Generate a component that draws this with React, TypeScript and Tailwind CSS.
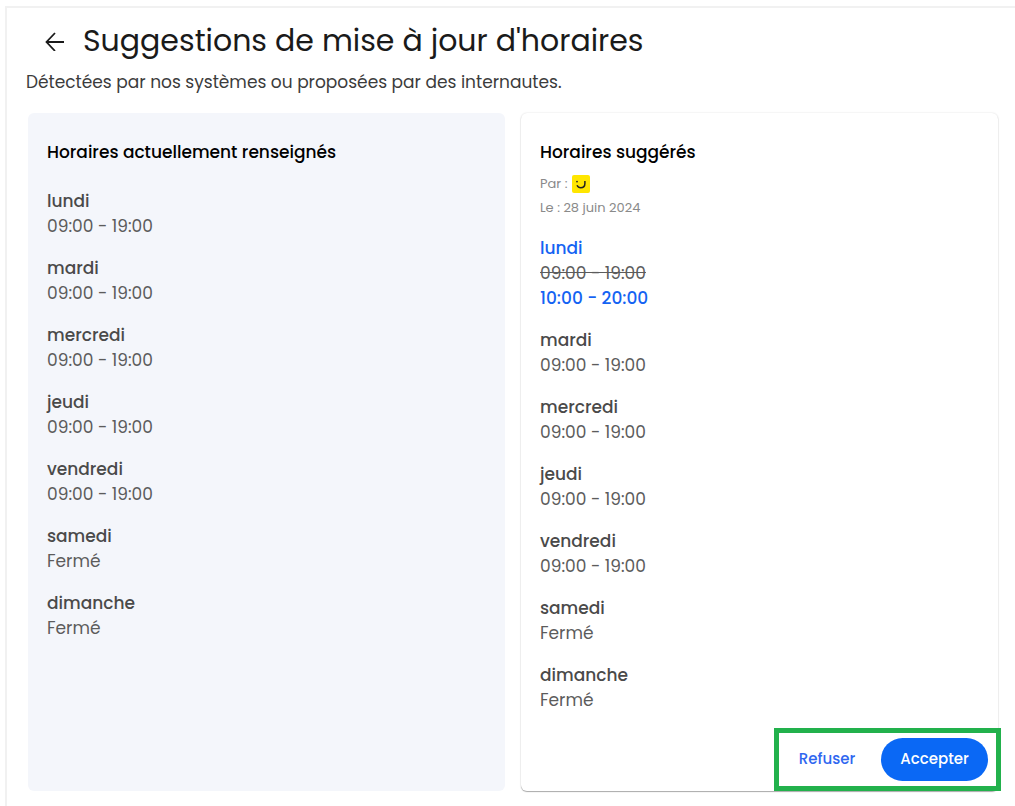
import { useState } from "react";

type Day = {
  name: string;
  hours: string;
  suggested?: string;
};

const currentHours: Day[] = [
  { name: "lundi", hours: "09:00 - 19:00" },
  { name: "mardi", hours: "09:00 - 19:00" },
  { name: "mercredi", hours: "09:00 - 19:00" },
  { name: "jeudi", hours: "09:00 - 19:00" },
  { name: "vendredi", hours: "09:00 - 19:00" },
  { name: "samedi", hours: "Fermé" },
  { name: "dimanche", hours: "Fermé" },
];

const suggestedHours: Day[] = currentHours.map(d =>
  d.name === "lundi" ? { ...d, suggested: "10:00 - 20:00" } : d
);

function DayList({ days }: { days: Day[] }) {
  return (
    <ul className="flex flex-col gap-[17px] text-[17px] leading-[25px] text-[#5c5c5c]">
      {days.map(d => (
        <li key={d.name}>
          <h3 className={d.suggested ? "font-medium text-[#1463f3]" : "font-medium text-[#4a4a4a]"}>{d.name}</h3>
          <p className={d.suggested ? "line-through" : ""}>{d.hours}</p>
          {d.suggested && <p className="font-medium text-[#1463f3]">{d.suggested}</p>}
        </li>
      ))}
    </ul>
  );
}

function Smiley() {
  return (
    <svg viewBox="0 0 18 18" className="size-[18px]" role="img" aria-label="PagesJaunes">
      <rect width="18" height="18" rx="2" fill="#ffe600" />
      <circle cx="5" cy="6.6" r="0.9" fill="#222" />
      <path d="M5 10.2c.8 1.8 2 2.6 3.7 2.6 2.7 0 4.2-1.6 4.2-4.2V6" fill="none" stroke="#222" strokeWidth="1.5" />
    </svg>
  );
}

export default function App() {
  const [, setAnswer] = useState<"accepted" | "refused" | null>(null);

  return (
    <main className="ml-[5px] mt-1.5 min-h-[calc(100vh-6px)] border-l-2 border-t-2 border-[#f1f1f1] bg-white pl-[21px] pr-[17px] font-['Poppins','Inter',sans-serif]">
      <header className="-ml-0.5 pt-[13px]">
        <div className="flex items-center gap-[18px] pl-[19px]">
          <button type="button" aria-label="Retour" className="shrink-0">
            <svg viewBox="0 0 20 20" className="size-5" fill="none" stroke="#1a1a1a" strokeWidth="1.8">
              <path d="M19 11H1.500M10 2 1.500 11l8.500 9" />
            </svg>
          </button>
          <h1 className="text-[30px] leading-10 text-[#1a1a1a]">Suggestions de mise à jour d'horaires</h1>
        </div>
        <p className="mt-[9px] text-[17px] leading-[25px] text-[#3c3c3c]">
          Détectées par nos systèmes ou proposées par des internautes.
        </p>
      </header>

      <div className="mt-[18px] grid grid-cols-2 gap-4">
        <section className="rounded-md bg-[#f4f6fb] px-[19px] pt-[27px]">
          <h2 className="mb-6 text-[17px] font-medium leading-[25px] text-black">
            Horaires actuellement renseignés
          </h2>
          <DayList days={currentHours} />
        </section>

        <section className="flex flex-col rounded-md bg-white px-[19px] pt-[27px] shadow-[0_1px_1px_#aaa,0_0_2px_#ddd]">
          <h2 className="mb-[7px] text-[17px] font-medium leading-[25px] text-black">Horaires suggérés</h2>
          <div className="mb-4 text-[13px] leading-6 text-[#8a8a8a]">
            <p className="flex items-center gap-[5px]">Par : <Smiley /></p>
            <p>Le : 28 juin 2024</p>
          </div>
          <DayList days={suggestedHours} />
          <div className="-mr-[22px] mt-[15px] flex items-center gap-[7px] self-end border-[5px] border-[#22b14c] py-[5px] pl-px pr-2">
            <button
              type="button"
              onClick={() => setAnswer("refused")}
              className="h-[43px] w-[94px] text-[15px] font-medium text-[#2f67f0]"
            >
              Refuser
            </button>
            <button
              type="button"
              onClick={() => setAnswer("accepted")}
              className="h-[43px] w-[107px] rounded-full bg-[#0a68f5] text-[15px] font-medium text-white"
            >
              Accepter
            </button>
          </div>
        </section>
      </div>
    </main>
  );
}
